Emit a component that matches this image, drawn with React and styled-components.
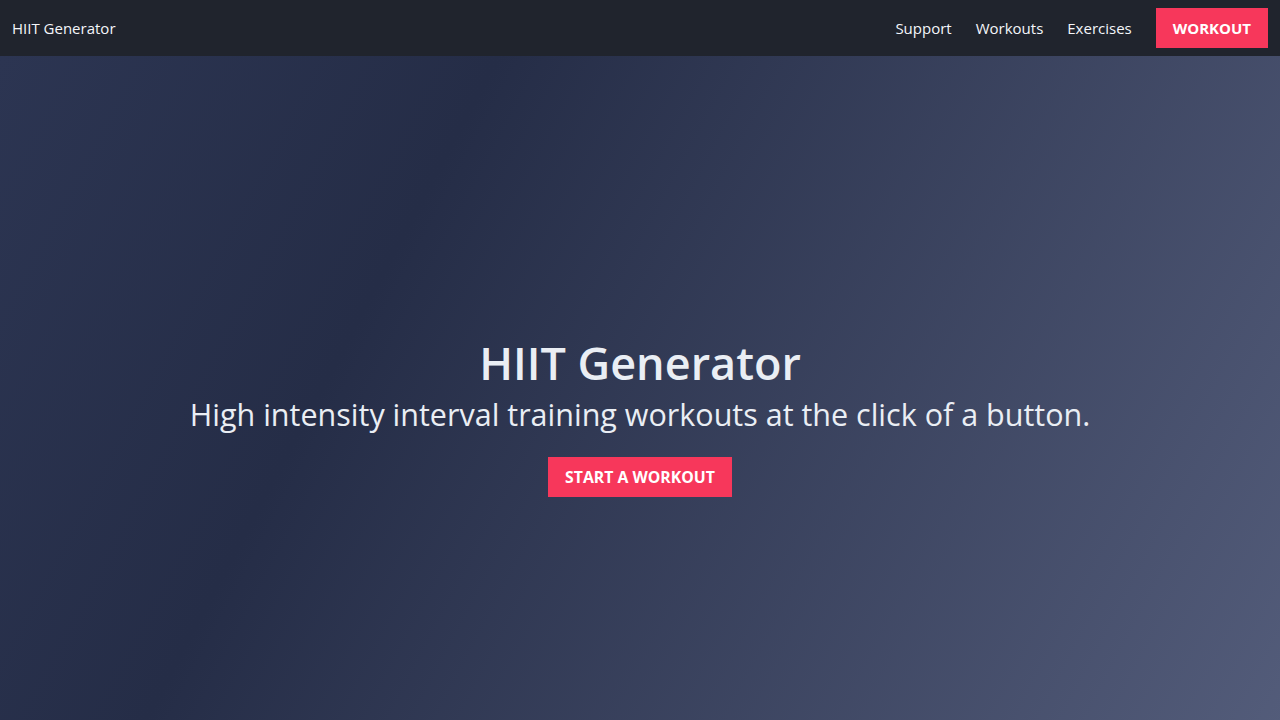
import React from "react";
import styled, { createGlobalStyle } from "styled-components";

const GlobalStyle = createGlobalStyle`
  *, *::before, *::after { box-sizing: border-box; }
  html, body { margin: 0; padding: 0; }
  body {
    font-family: "Open Sans", "Noto Sans", "Liberation Sans", sans-serif;
    background: #21252e;
    color: #f2f4f8;
  }
`;

const NavBar = styled.nav`
  height: 56px;
  background: #20242d;
  display: flex;
  align-items: center;
  justify-content: space-between;
  padding: 0 12px;
`;

const Brand = styled.a`
  color: #f4f6fa;
  font-size: 15px;
  text-decoration: none;
`;

const NavLinks = styled.div`
  display: flex;
  align-items: center;
  gap: 24px;
`;

const NavLink = styled.a`
  color: #f4f6fa;
  font-size: 15px;
  text-decoration: none;
`;

const CtaButton = styled.a`
  display: inline-flex;
  align-items: center;
  justify-content: center;
  height: 40px;
  padding: 0 17px;
  background: #f7375b;
  color: #ffffff;
  font-weight: 700;
  font-size: ${(p) => (p.$large ? "15.8px" : "15px")};
  text-transform: uppercase;
  text-decoration: none;
`;

const Hero = styled.section`
  min-height: 100vh;
  display: flex;
  flex-direction: column;
  align-items: center;
  justify-content: center;
  text-align: center;
  background: linear-gradient(118deg, #2c3552 0%, #252d47 30%, #545d7b 100%);
`;

const Title = styled.h1`
  margin: 0 0 5px;
  font-size: 45px;
  font-weight: 600;
  line-height: 1.25;
  color: #eaeef4;
`;

const Subtitle = styled.p`
  margin: 0 0 24px;
  font-size: 30.5px;
  font-weight: 400;
  line-height: 1.2;
  color: #eaeef4;
`;

export default function App() {
  return (
    <>
      <GlobalStyle />
      <NavBar>
        <Brand href="#">HIIT Generator</Brand>
        <NavLinks>
          <NavLink href="#">Support</NavLink>
          <NavLink href="#">Workouts</NavLink>
          <NavLink href="#">Exercises</NavLink>
          <CtaButton href="#">Workout</CtaButton>
        </NavLinks>
      </NavBar>
      <Hero>
        <Title>HIIT Generator</Title>
        <Subtitle>High intensity interval training workouts at the click of a button.</Subtitle>
        <CtaButton href="#" $large>Start a workout</CtaButton>
      </Hero>
    </>
  );
}
